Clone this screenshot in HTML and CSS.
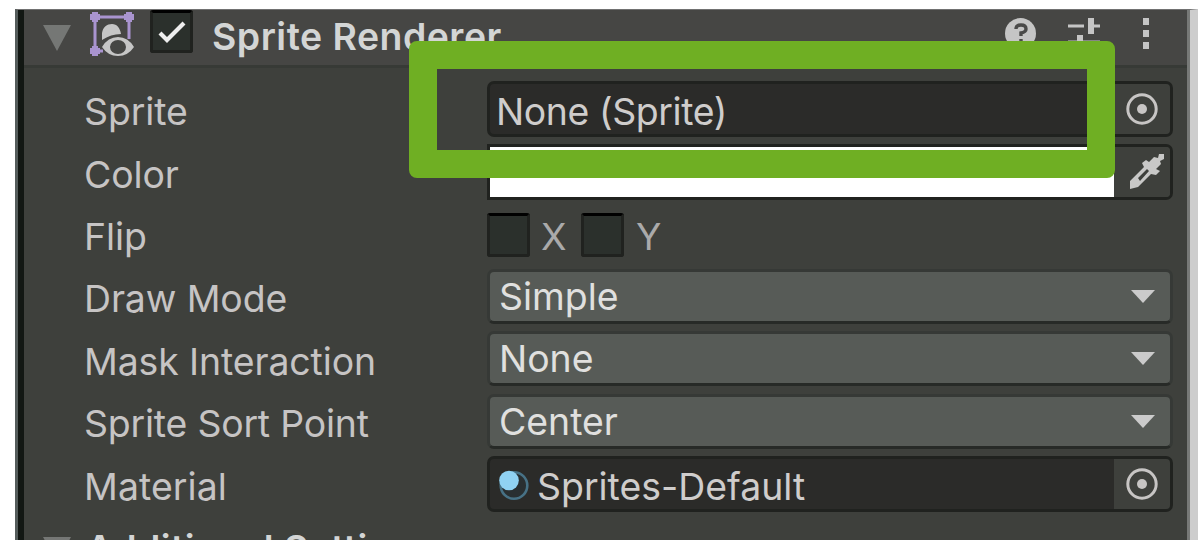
FILE: index.html
```html
<!DOCTYPE html>
<html lang="en">
<head>
<meta charset="utf-8">
<title>Sprite Renderer</title>
<link rel="stylesheet" href="styles.css">
</head>
<body>
<main class="inspector">
  <header class="header">
    <svg class="foldout" width="28" height="26" viewBox="0 0 28 26"><path d="M0 0H28L14 26Z" fill="#757775"/></svg>
    <svg class="component-icon" width="44" height="46" viewBox="0 0 44 46">
      <path d="M5 39V5H39V27M5 39H13" fill="none" stroke="#a994cf" stroke-width="3"/>
      <path d="M0 2H2V0H8V2H10V8H8V10H2V8H0ZM34 2H36V0H42V2H44V8H42V10H36V8H34ZM0 36H2V34H8V36H10V42H8V44H2V42H0Z" fill="#a994cf"/>
      <path d="M12 28V21C13 15 17 12 22 12C27 12 30 16 31 22C24 22 18 24 12 28Z" fill="#c6c6c6"/>
      <path fill-rule="evenodd" d="M12 35Q18 25 28 25Q38 25 44 35Q38 44 28 44Q18 44 12 35ZM20 35A8 7 0 0 0 36 35A8 7 0 0 0 20 35Z" fill="#c6c6c6"/>
      <path d="M24 32L28 29L33 32V38L28 40L24 38Z" fill="#454644"/>
    </svg>
    <span class="checkbox checked"><svg width="28" height="22" viewBox="0 0 28 22"><path d="M2 12L9 19L26 2" fill="none" stroke="#eee" stroke-width="4.2"/></svg></span>
    <h1 class="title">Sprite Renderer</h1>
    <div class="tools">
      <svg width="31" height="31" viewBox="0 0 31 31"><circle cx="15.5" cy="15.5" r="15.5" fill="#c5c5c5"/><path d="M11 11Q11 7 16 7Q21 7 21 11Q21 14 16 15V18M16 21V24" fill="none" stroke="#4a4a49" stroke-width="3.4"/></svg>
      <svg width="32" height="32" viewBox="0 0 32 32"><path d="M0 8H16M22 8H32M0 24H9M15 24H32" stroke="#c5c5c5" stroke-width="3"/><path d="M23 0V16M12 17V32" stroke="#c5c5c5" stroke-width="6"/></svg>
      <svg width="8" height="32" viewBox="0 0 8 32"><path d="M1 0H7V7H1ZM1 12H7V19H1ZM1 24H7V31H1Z" fill="#c5c5c5"/></svg>
    </div>
  </header>
  <section class="properties">
    <div class="row"><span class="label">Sprite</span>
      <div class="field object"><span class="value sprite-value">None (Sprite)</span><span class="picker"><svg width="32" height="32" viewBox="0 0 32 32"><circle cx="16" cy="16" r="14.2" fill="none" stroke="#c7c5c4" stroke-width="3"/><circle cx="16" cy="16" r="5" fill="#c7c5c4"/></svg></span></div></div>
    <div class="row"><span class="label">Color</span>
      <div class="field color"><span class="swatch"></span><span class="picker dropper"><svg width="34" height="36" viewBox="0 0 34 36"><path fill-rule="evenodd" d="M0 35V27L14 13L12 9L16 6L19 8L24 3L28 4L29 0H34V5L30 7L31 10L26 15L30 17L26 21L21 20L8 33ZM8 24L10 27L19 17L17 15Z" fill="#c8c8c7"/></svg></span></div></div>
    <div class="row"><span class="label">Flip</span>
      <div class="flip"><span class="checkbox"></span><span class="axis">X</span><span class="checkbox"></span><span class="axis axis-y">Y</span></div></div>
    <div class="row"><span class="label">Draw Mode</span>
      <div class="field dropdown"><span class="value">Simple</span><svg class="arrow" width="24" height="13" viewBox="0 0 24 13"><path d="M0 0H24L12 13Z" fill="#cbcbcb"/></svg></div></div>
    <div class="row"><span class="label">Mask Interaction</span>
      <div class="field dropdown"><span class="value">None</span><svg class="arrow" width="24" height="13" viewBox="0 0 24 13"><path d="M0 0H24L12 13Z" fill="#cbcbcb"/></svg></div></div>
    <div class="row"><span class="label sort-label">Sprite Sort Point</span>
      <div class="field dropdown"><span class="value">Center</span><svg class="arrow" width="24" height="13" viewBox="0 0 24 13"><path d="M0 0H24L12 13Z" fill="#cbcbcb"/></svg></div></div>
    <div class="row"><span class="label material-label">Material</span>
      <div class="field object"><svg class="material-icon" width="30" height="31" viewBox="0 0 30 31"><circle cx="15" cy="15.5" r="13.3" fill="#292f31" stroke="#477185" stroke-width="2.6"/><circle cx="10" cy="10.5" r="9.8" fill="#90d2f3"/></svg><span class="value material-value">Sprites-Default</span><span class="picker"><svg width="32" height="32" viewBox="0 0 32 32"><circle cx="16" cy="16" r="14.2" fill="none" stroke="#c7c5c4" stroke-width="3"/><circle cx="16" cy="16" r="5" fill="#c7c5c4"/></svg></span></div></div>
  </section>
  <section class="section-heading">
    <svg width="28" height="26" viewBox="0 0 28 26"><path d="M0 0H28L14 26Z" fill="#757775"/></svg>
    <h2 class="title">Additional Settings</h2>
  </section>
</main>
<div class="highlight"></div>
</body>
</html>
```
FILE: styles.css
```css
* { box-sizing: border-box; }
body {
  margin: 0;
  height: 540px;
  padding: 9px 0 0 15px;
  overflow: hidden;
  background: #fff;
  font-family: Inter, "Liberation Sans", sans-serif;
  font-size: 37.4px;
  color: #c6c4c4;
}
svg { display: block; flex: none; }
.inspector {
  height: 531px;
  overflow: hidden;
  border-left: 3px solid #555c5b;
  border-right: 8px solid #cdcdcd;
  border-top: 1px solid #717171;
  background: #3e403c;
  box-shadow: inset 6px 0 #121713, inset -3px 0 #777977;
  padding: 0 3px 0 6px;
}
.header {
  display: flex;
  align-items: flex-start;
  height: 58px;
  background: #464644;
  border-bottom: 3px solid #373a36;
}
.foldout { margin: 15px 0 0 19px; }
.component-icon { margin: 2px 0 0 19px; }
.checkbox {
  display: flex;
  justify-content: center;
  width: 43px;
  height: 44px;
  border: 3px solid #20221f;
  border-top-color: #000;
  border-radius: 3px;
  background: #2b302c;
}
.checked { margin-left: 16px; height: 43px; padding-top: 8px; }
.title {
  margin: 0;
  font-size: 37.4px;
  font-weight: 600;
  line-height: 54px;
  letter-spacing: 0.5px;
  white-space: nowrap;
  color: #d3d5d5;
}
.header .title { margin-left: 19px; }
.tools { display: flex; gap: 32px; margin: 8px 37px 0 auto; }
.tools svg:last-child { margin-left: 10px; }
.properties { padding: 10px 14px 0 60px; }
.row {
  display: grid;
  grid-template-columns: 403px 686px;
  align-items: center;
  height: 62.4px;
}
.label { padding-top: 5px; white-space: nowrap; letter-spacing: -0.1px; }
.sort-label { letter-spacing: -0.2px; }
.material-label { letter-spacing: 0.1px; }
.field {
  display: flex;
  align-items: center;
  height: 56px;
  border: 3px solid #20221f;
  border-radius: 7px;
  overflow: hidden;
}
.object { background: #2b2b29; }
.value { flex: 1; padding-left: 9px; color: #e0e0df; white-space: nowrap; }
.sprite-value, .material-value { padding-top: 5px; color: #cfcdcc; }
.sprite-value { padding-left: 6px; letter-spacing: -0.4px; }
.material-value { padding-left: 8px; }
.picker {
  display: flex;
  align-items: center;
  justify-content: center;
  width: 56px;
  height: 50px;
  background: #3e403c;
}
.dropper { padding: 0 0 0 9px; }
.swatch { flex: 1; height: 50px; background: #fff; }
.color { border-radius: 0 7px 7px 0; }
.flip { display: flex; align-items: center; }
.flip .checkbox { margin-top: 2px; }
.axis { width: 51px; padding: 5px 0 0 11px; color: #aaa; }
.axis-y { padding-left: 12px; }
.dropdown {
  height: 55px;
  background: #575b57;
  border-color: #363936;
  border-bottom-color: #272a27;
}
.arrow { margin: 0 15px 0 0; }
.material-icon { margin: 3px 0 0 9px; }
.section-heading { display: flex; padding-left: 19px; gap: 15px; }
.section-heading svg { margin-top: 22px; }
.section-heading .title { margin-top: 7px; }
.highlight {
  position: absolute;
  left: 408.5px;
  top: 41px;
  width: 706px;
  height: 137px;
  border: 28px solid #6faf23;
  border-radius: 8px;
}
```
